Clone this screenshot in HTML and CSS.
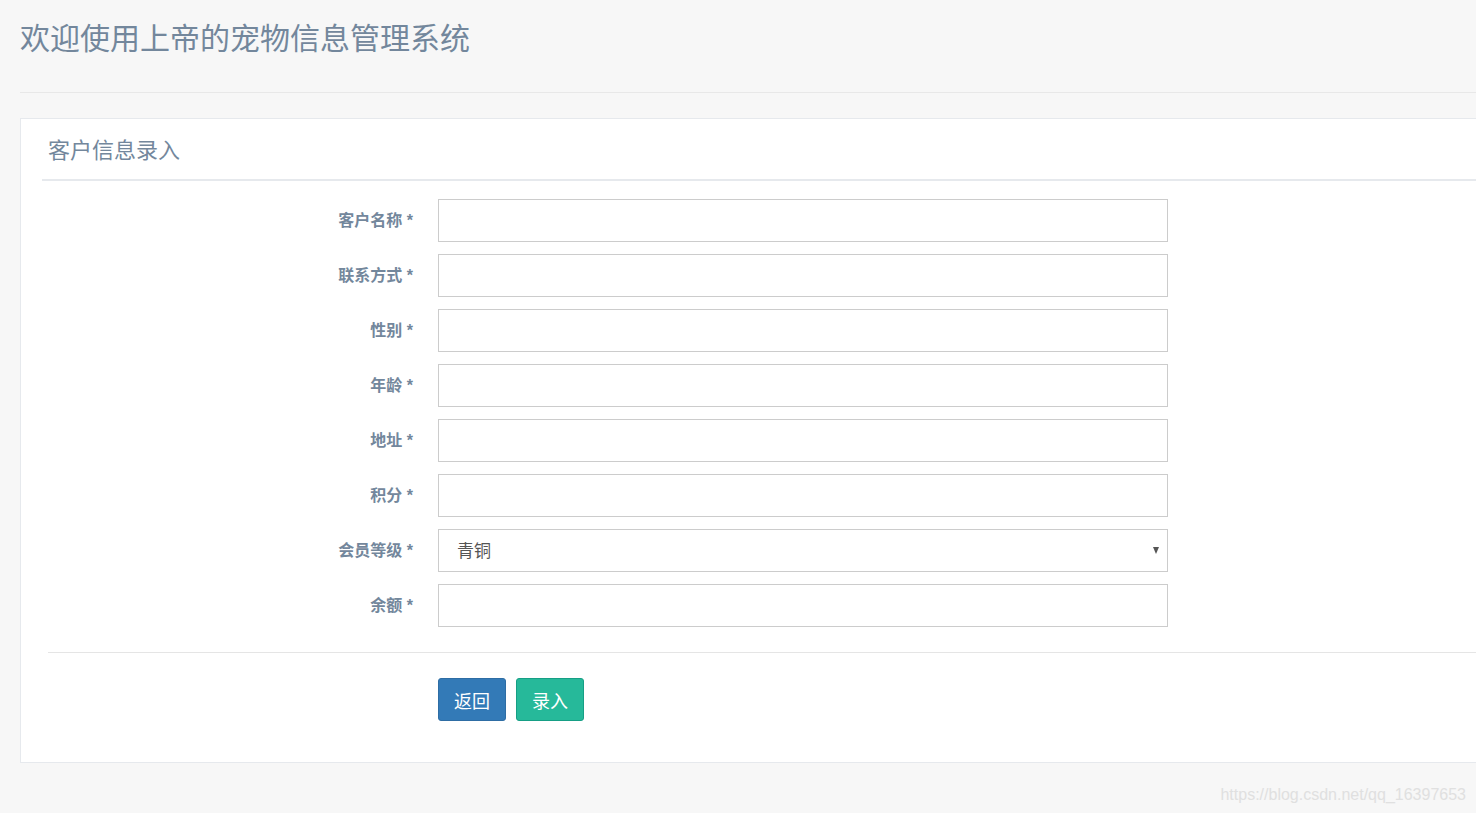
FILE: index.html
```html
<!DOCTYPE html>
<html lang="zh-CN">
<head>
<meta charset="utf-8">
<title>欢迎使用上帝的宠物信息管理系统</title>
<link rel="stylesheet" href="styles.css">
</head>
<body>
<div class="page">
  <div class="page-title">
    <h3>欢迎使用上帝的宠物信息管理系统</h3>
  </div>
  <div class="panel">
    <div class="panel-title"><h2>客户信息录入</h2></div>
    <form class="form">
      <label class="form-label">客户名称 *</label>
      <input class="form-input" type="text">
      <label class="form-label">联系方式 *</label>
      <input class="form-input" type="text">
      <label class="form-label">性别 *</label>
      <input class="form-input" type="text">
      <label class="form-label">年龄 *</label>
      <input class="form-input" type="text">
      <label class="form-label">地址 *</label>
      <input class="form-input" type="text">
      <label class="form-label">积分 *</label>
      <input class="form-input" type="text">
      <label class="form-label">会员等级 *</label>
      <div class="select-wrap">
        <select class="form-input form-select">
          <option>青铜</option>
        </select>
      </div>
      <label class="form-label">余额 *</label>
      <input class="form-input" type="text">
    </form>
    <div class="divider"></div>
    <div class="actions">
      <button class="btn btn-primary" type="button">返回</button>
      <button class="btn btn-success" type="button">录入</button>
    </div>
  </div>
</div>
<div class="watermark">https://blog.csdn.net/qq_16397653</div>
</body>
</html>
```
FILE: styles.css
```css
html, body {
  margin: 0;
  padding: 0;
  background: #f7f7f7;
  overflow: hidden;
}
body {
  font-family: "Liberation Sans", Arial, "Noto Sans CJK SC", sans-serif;
  color: #73879c;
  height: 813px;
  position: relative;
}
.page {
  padding-left: 20px;
}
.page-title {
  border-bottom: 1px solid #e8e8e8;
  box-sizing: border-box;
  height: 93px;
}
.page-title h3 {
  margin: 0;
  padding-top: 19px;
  font-size: 30px;
  line-height: 40px;
  font-weight: 400;
  color: #73879c;
}
.panel {
  margin-top: 25px;
  margin-right: -30px;
  background: #fff;
  border: 1px solid #e6e9ed;
  padding: 0 0 41px 21px;
}
.panel-title {
  border-bottom: 2px solid #e6e9ed;
  height: 62px;
  box-sizing: border-box;
}
.panel-title h2 {
  margin: 0;
  padding: 17px 0 0 6px;
  font-size: 22px;
  line-height: 30px;
  font-weight: 400;
  color: #73879c;
}
.form {
  display: grid;
  grid-template-columns: 371px 730px;
  column-gap: 25px;
  row-gap: 12px;
  padding-top: 18px;
}
.form-label {
  text-align: right;
  font-size: 16px;
  font-weight: 700;
  line-height: 43px;
  color: #73879c;
}
.form-input {
  display: block;
  box-sizing: border-box;
  width: 730px;
  height: 43px;
  border: 1px solid #cccccc;
  background: #fff;
  margin: 0;
  padding: 2px 18px 0;
  font-family: "Liberation Sans", Arial, "Noto Sans CJK SC", sans-serif;
  font-size: 17px;
  color: #555;
  outline: none;
}
.select-wrap {
  position: relative;
}
.form-select {
  appearance: none;
  -webkit-appearance: none;
  border-radius: 0;
}
.select-wrap::after {
  content: "";
  position: absolute;
  right: 9px;
  top: 18px;
  border-left: 3.5px solid transparent;
  border-right: 3.5px solid transparent;
  border-top: 7px solid #555;
  pointer-events: none;
}
.divider {
  margin: 25px 0 0 6px;
  border-top: 1px solid #e5e5e5;
}
.actions {
  display: flex;
  gap: 10px;
  padding: 25px 0 0 396px;
}
.btn {
  width: 68px;
  height: 43px;
  border-radius: 3px;
  font-family: "Liberation Sans", Arial, "Noto Sans CJK SC", sans-serif;
  font-size: 18px;
  color: #fff;
  padding: 0;
  cursor: pointer;
}
.btn-primary {
  background: #337ab7;
  border: 1px solid #2e6da4;
}
.btn-success {
  background: #26b99a;
  border: 1px solid #169f85;
}
.watermark {
  position: absolute;
  right: 10px;
  bottom: 9px;
  font-size: 16px;
  color: #e0e0e0;
  font-family: "Liberation Sans", Arial, sans-serif;
}
```
